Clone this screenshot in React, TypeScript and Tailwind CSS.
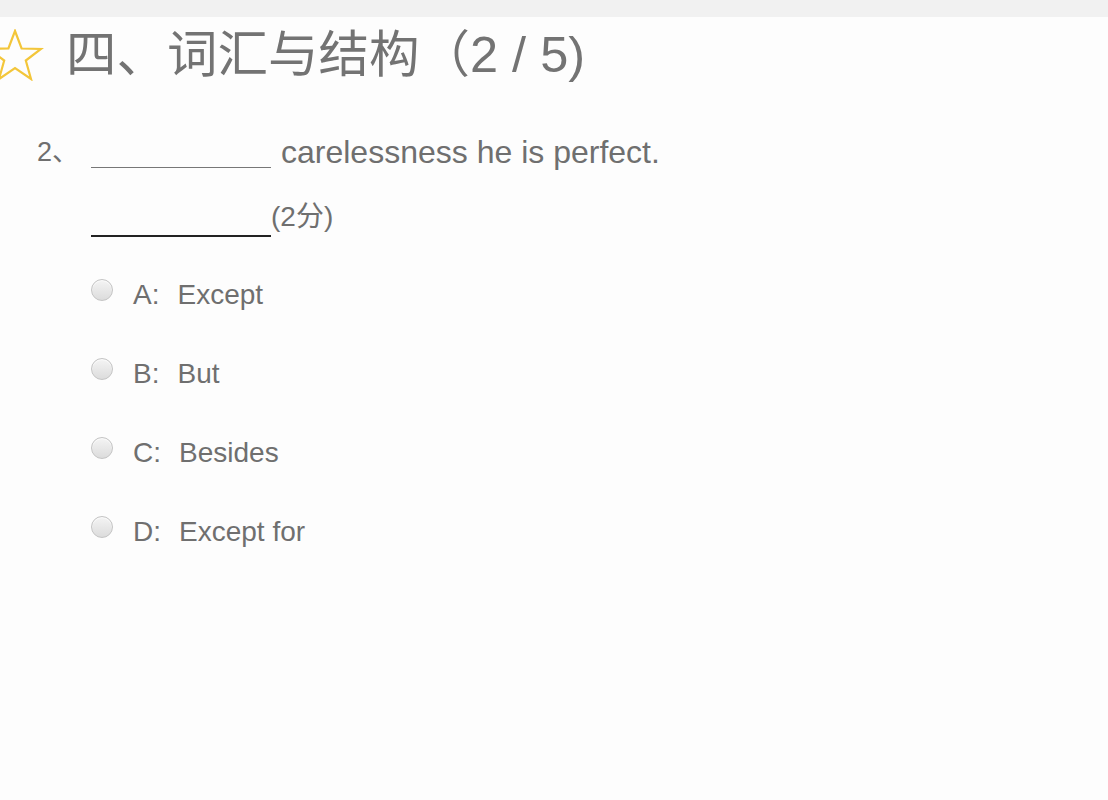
const options = [
  { key: "A", text: "Except" },
  { key: "B", text: "But" },
  { key: "C", text: "Besides" },
  { key: "D", text: "Except for" },
]

function Star() {
  return (
    <svg width="58" height="52" viewBox="0 0 58 52" className="-ml-[14px] shrink-0">
      <polygon
        points="29,2 35.6,19.5 55,20 39.8,31.5 45,50 29,39.2 13,50 18.2,31.5 3,20 22.4,19.5"
        fill="none"
        stroke="#f3c63a"
        strokeWidth="2.2"
        strokeLinejoin="miter"
      />
    </svg>
  )
}

function Radio() {
  return (
    <span className="block h-[22px] w-[22px] shrink-0 rounded-full border border-[#c4c4c4] bg-gradient-to-b from-[#f4f4f4] to-[#dcdcdc] shadow-[inset_0_1px_1px_rgba(255,255,255,0.8)]" />
  )
}

export default function App() {
  return (
    <div className="min-h-[800px] w-[1108px] overflow-hidden bg-[#fdfdfd] font-['Liberation_Sans','Noto_Sans_CJK_SC',sans-serif] text-[#6f6f6f]">
      <div className="h-[17px] bg-[#f1f1f1]" />
      <div className="flex h-[60px] items-center mt-[8px]">
        <Star />
        <h1 className="ml-[22px] text-[50.5px] leading-[60px] text-[#737373]">
          四、词汇与结构（2 / 5)
        </h1>
      </div>
      {/* question */}
      <div className="mt-[49px] flex h-[36px] items-end pl-[37px]">
        <span className="w-[54px] text-[27px] leading-[36px]">2、</span>
        <span className="mb-[2px] inline-block w-[180px] border-b border-[#777]" />
        <span className="ml-[10px] text-[32px] leading-[36px]">carelessness he is perfect.</span>
      </div>
      <div className="mt-[33px] flex h-[34px] items-end pl-[91px]">
        <span className="inline-block w-[180px] border-b-2 border-[#222]" />
        <span className="mb-[5px] text-[28px] leading-[30px]">(2分)</span>
      </div>
      <ul className="mt-[42px] flex flex-col gap-[47px] pl-[91px]">
        {options.map((o) => (
          <li key={o.key} className="flex h-[32px] items-start">
            <Radio />
            <span className="ml-[20px] text-[28px] leading-[32px]">
              {o.key}:<span className="ml-[18px]">{o.text}</span>
            </span>
          </li>
        ))}
      </ul>
    </div>
  )
}
